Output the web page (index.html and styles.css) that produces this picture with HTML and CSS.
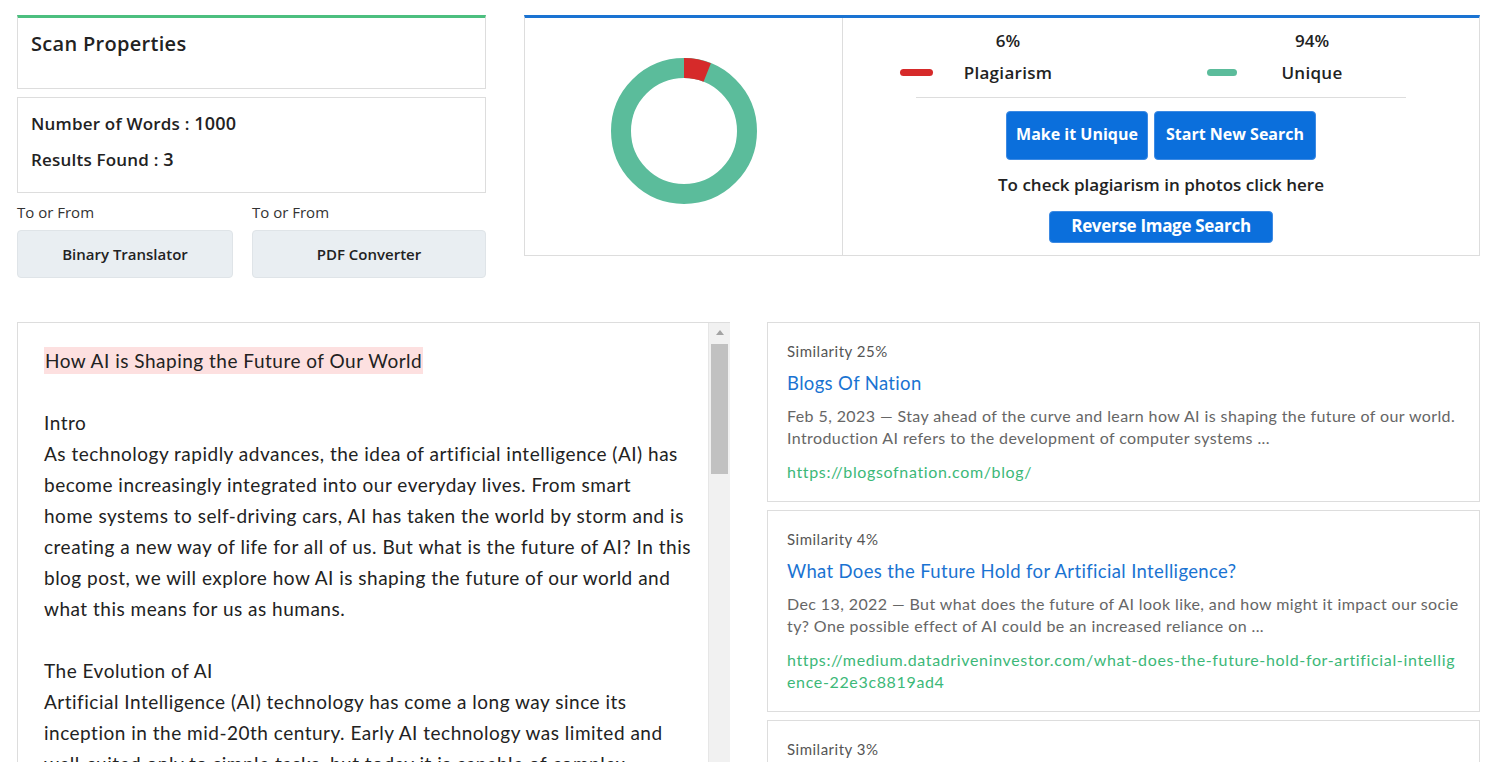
FILE: index.html
```html
<!DOCTYPE html>
<html lang="en">
<head>
    <meta charset="UTF-8">
    <meta name="viewport" content="width=device-width, initial-scale=1.0">
    <title>Plagiarism Report</title>
    <link rel="stylesheet" href="styles.css">
</head>
<body>
    <div class="top">
        <div class="props">
            <div class="props-head">Scan Properties</div>
            <div class="stats">
                <p>Number of Words : <b>1000</b></p>
                <p>Results Found : <b>3</b></p>
            </div>
            <div class="tools">
                <div class="tool">
                    <span>To or From</span>
                    <button>Binary Translator</button>
                </div>
                <div class="tool">
                    <span>To or From</span>
                    <button>PDF Converter</button>
                </div>
            </div>
        </div>

        <div class="overview">
            <div class="chart">
                <svg width="146" height="146" viewBox="0 0 146 146">
                    <circle cx="73" cy="73" r="63" fill="none" stroke="#5bbc9b" stroke-width="20"/>
                    <circle cx="73" cy="73" r="63" fill="none" stroke="#d62a2a" stroke-width="20"
                        stroke-dasharray="23.75 400" transform="rotate(-90 73 73)"/>
                </svg>
            </div>
            <div class="summary">
                <div class="legend">
                    <div class="legend-item">
                        <i class="dash red"></i>
                        <div class="legend-text"><strong>6%</strong><span>Plagiarism</span></div>
                    </div>
                    <div class="legend-item">
                        <i class="dash green"></i>
                        <div class="legend-text"><strong>94%</strong><span>Unique</span></div>
                    </div>
                </div>
                <hr>
                <div class="actions">
                    <button class="btn">Make it Unique</button>
                    <button class="btn">Start New Search</button>
                </div>
                <p class="photos">To check plagiarism in photos click here</p>
                <button class="btn btn-small">Reverse Image Search</button>
            </div>
        </div>
    </div>

    <div class="bottom">
        <div class="doc">
            <div class="doc-text">
                <p><mark>How AI is Shaping the Future of Our World</mark></p>
                <p>Intro<br>
                    As technology rapidly advances, the idea of artificial intelligence (AI) has<br>
                    become increasingly integrated into our everyday lives. From smart<br>
                    home systems to self-driving cars, AI has taken the world by storm and is<br>
                    creating a new way of life for all of us. But what is the future of AI? In this<br>
                    blog post, we will explore how AI is shaping the future of our world and<br>
                    what this means for us as humans.</p>
                <p>The Evolution of AI<br>
                    Artificial Intelligence (AI) technology has come a long way since its<br>
                    inception in the mid-20th century. Early AI technology was limited and<br>
                    well-suited only to simple tasks, but today it is capable of complex<br>
                    problem solving.</p>
            </div>
            <div class="scrollbar">
                <span class="arrow"></span>
                <span class="thumb"></span>
            </div>
        </div>

        <div class="results">
            <div class="result">
                <p class="sim">Similarity 25%</p>
                <a class="res-title" href="#">Blogs Of Nation</a>
                <p class="desc">Feb 5, 2023 — Stay ahead of the curve and learn how AI is shaping the future of our world. Introduction AI refers to the development of computer systems ...</p>
                <a class="url" href="#">https://blogsofnation.com/blog/</a>
            </div>
            <div class="result">
                <p class="sim">Similarity 4%</p>
                <a class="res-title" href="#">What Does the Future Hold for Artificial Intelligence?</a>
                <p class="desc">Dec 13, 2022 — But what does the future of AI look like, and how might it impact our society? One possible effect of AI could be an increased reliance on ...</p>
                <a class="url" href="#">https://medium.datadriveninvestor.com/what-does-the-future-hold-for-artificial-intelligence-22e3c8819ad4</a>
            </div>
            <div class="result">
                <p class="sim">Similarity 3%</p>
                <a class="res-title" href="#">The Future of AI: How Artificial Intelligence Will Change the World</a>
                <p class="desc">Jan 28, 2023 — Artificial intelligence is impacting the future of virtually every industry and every human being ...</p>
            </div>
        </div>
    </div>
</body>
</html>
```

FILE: styles.css
```css
* { margin: 0; padding: 0; box-sizing: border-box; }
body {
    padding: 15px 18px 0 17px;
    background-color: #FFF;
    color: #222;
    font-family: "Open Sans", "Noto Sans", sans-serif;
    overflow: hidden;
}
button { font-family: inherit; cursor: pointer; }

/* top row */
.top { display: flex; gap: 38px; }
.props { flex: 0 0 469px; }
.props-head {
    height: 74px;
    padding: 13px 13px;
    border: 1px solid #ddd;
    border-top: 3px solid #4cbf7f;
    font-size: 20px;
    font-weight: 600;
    line-height: 26px;
    letter-spacing: 0.3px;
}
.stats {
    margin-top: 8px;
    padding: 12px 13px 19px;
    border: 1px solid #ddd;
    font-size: 17px;
    font-weight: 600;
    line-height: 26px;
    letter-spacing: 0.2px;
}
.stats p + p { margin-top: 9px; }
.stats b { font-weight: 600; font-size: 18px; }
.tools {
    display: grid;
    grid-template-columns: 216px 1fr;
    gap: 19px;
    margin-top: 10px;
}
.tool span {
    display: block;
    font-size: 15px;
    line-height: 18px;
    color: #333;
}
.tool button {
    display: block;
    width: 100%; height: 48px;
    margin-top: 9px;
    background-color: #e9eef2;
    border: 1px solid #dfe4e8;
    border-radius: 4px;
    font-size: 15px;
    font-weight: 600;
    color: #222;
}

.overview {
    flex: 1;
    display: flex;
    height: 241px;
    border: 1px solid #ddd;
    border-top: 3px solid #1a73d2;
}
.chart {
    flex: 0 0 318px;
    display: flex;
    justify-content: center;
    padding-top: 40px;
    border-right: 1px solid #ddd;
}
.summary {
    flex: 1;
    display: flex;
    flex-direction: column;
    align-items: center;
    padding-top: 11px;
}
.legend {
    display: grid;
    grid-template-columns: 307px 160px;
    margin-left: -55px;
}
.legend-item { display: flex; align-items: flex-end; }
.dash {
    display: block;
    height: 7px;
    margin: 0 20px 9px 0;
    border-radius: 4px;
}
.dash.red { width: 33px; background-color: #d62a2a; }
.dash.green { width: 30px; background-color: #5bbc9b; }
.legend-text {
    display: flex;
    flex-direction: column;
    align-items: center;
    width: 110px;
    line-height: 24px;
}
.legend-text strong { font-size: 17px; font-weight: 600; }
.legend-text span { margin-top: 8px; font-size: 17px; font-weight: 600; letter-spacing: 0.3px; }
hr {
    width: 490px;
    margin-top: 12px;
    border: 0;
    border-top: 1px solid #ddd;
}
.actions { display: flex; gap: 6px; margin-top: 13px; }
.btn {
    height: 49px;
    padding: 0 0 3px;
    background-color: #0b6fdc;
    border: 1px solid #3d8ae3;
    border-radius: 4px;
    color: #FFF;
    font-size: 16px;
    font-weight: 700;
}
.actions .btn:first-child { width: 142px; }
.actions .btn:last-child { width: 162px; }
.photos {
    margin-top: 13px;
    font-size: 17px;
    font-weight: 600;
    line-height: 24px;
}
.btn-small {
    width: 224px; height: 32px;
    margin-top: 14px;
    font-size: 17px;
    letter-spacing: -0.3px;
}

/* bottom row */
.bottom {
    display: grid;
    grid-template-columns: 1fr 1fr;
    gap: 37px;
    margin-top: 44px;
}
.doc {
    display: flex;
    height: 480px;
    border: 1px solid #ddd;
    border-right: 0;
    font-family: Lato, "Open Sans", sans-serif;
}
.doc-text {
    flex: 1;
    padding: 22px 10px 0 26px;
    overflow: hidden;
    white-space: nowrap;
    font-size: 19px;
    line-height: 31px;
    letter-spacing: 0.5px;
    color: #222;
}
.doc-text p { margin-bottom: 31px; }
mark {
    padding: 2px 1px;
    background-color: #fde0e0;
    color: #222;
}
.scrollbar {
    flex: 0 0 22px;
    display: flex;
    flex-direction: column;
    align-items: center;
    background-color: #f1f1f1;
    border-left: 1px solid #e6e6e6;
}
.arrow {
    margin-top: 7px;
    border: 4px solid transparent;
    border-bottom: 5px solid #a3a3a3;
    border-top: 0;
}
.thumb {
    width: 17px; height: 130px;
    margin-top: 9px;
    background-color: #c1c1c1;
}

.results { display: flex; flex-direction: column; gap: 8px; }
.result {
    padding: 18px 19px 18px 19px;
    border: 1px solid #ddd;
    font-family: Lato, "Open Sans", sans-serif;
}
.sim { font-size: 15px; line-height: 20px; letter-spacing: 0.5px; color: #555; }
.res-title {
    display: block;
    margin-top: 9px;
    font-size: 18.5px;
    line-height: 26px;
    letter-spacing: 0.35px;
    color: #1a73d2;
    text-decoration: none;
}
.desc {
    margin-top: 9px;
    font-size: 16px;
    line-height: 22px;
    letter-spacing: 0.4px;
    color: #666;
    word-break: break-all;
}
.url {
    display: block;
    margin-top: 12px;
    font-size: 16px;
    line-height: 22px;
    letter-spacing: 0.65px;
    color: #3cb878;
    text-decoration: none;
    word-break: break-all;
}
```
